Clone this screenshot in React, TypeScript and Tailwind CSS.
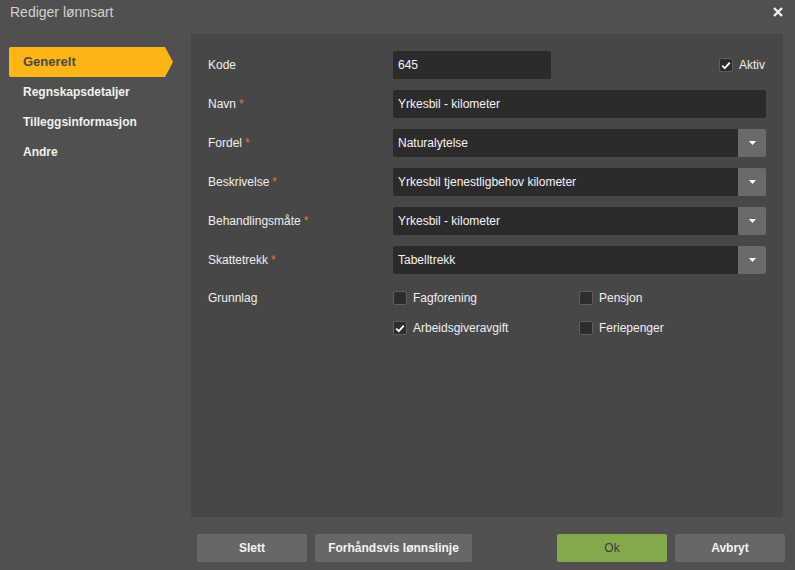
import React from "react";

const Req = () => <span className="text-[#e2792c] ml-[3px]">*</span>;

const Check = ({ checked }: { checked?: boolean }) => (
  <div className="w-[14px] h-[14px] bg-[#2d2d2d] border border-[#5e5e5e] rounded-[2px] flex items-center justify-center shrink-0">
    {checked && (
      <svg width="10" height="9" viewBox="0 0 10 9">
        <path d="M1.2 4.6 L3.8 7.2 L8.8 1.6" stroke="#ffffff" strokeWidth="1.8" fill="none" />
      </svg>
    )}
  </div>
);

const Label = ({ text, req }: { text: string; req?: boolean }) => (
  <div className="h-[28px] flex items-center text-[12px] text-[#efefef]">
    {text}
    {req && <Req />}
  </div>
);

const Select = ({ value }: { value: string }) => (
  <div className="h-[28px] flex rounded-[2px] overflow-hidden">
    <div className="flex-1 bg-[#2b2b2b] pl-[5px] flex items-center text-[12px] text-[#f4f4f4]">{value}</div>
    <div className="w-[28px] bg-[#6a6a6a] flex items-center justify-center">
      <svg width="7" height="4" viewBox="0 0 7 4">
        <polygon points="0,0 7,0 3.5,4" fill="#ffffff" />
      </svg>
    </div>
  </div>
);

export default function App() {
  const side = ["Regnskapsdetaljer", "Tilleggsinformasjon", "Andre"];
  return (
    <div className="w-[795px] h-[570px] bg-[#505050] relative font-['Liberation_Sans',Arial,sans-serif] overflow-hidden">
      <div className="h-[34px] pl-[10px] pt-[4px] text-[14px] leading-[16px] text-[#d2d2d2]">Rediger lønnsart</div>
      <svg className="absolute left-[773px] top-[7px]" width="10" height="10" viewBox="0 0 10 10">
        <path d="M1 1 L9 9 M9 1 L1 9" stroke="#f0f0f0" strokeWidth="2.4" />
      </svg>

      <div className="flex h-[483px]">
        <div className="w-[191px] pl-[9px] pt-[13px]">
          <div className="flex h-[30px]">
            <div className="w-[156px] bg-[#fdb515] rounded-l-[2px] pl-[14px] flex items-center text-[13px] font-bold text-[#4a4a4a]">
              Generelt
            </div>
            <div className="w-0 h-0 border-y-[15px] border-y-transparent border-l-[8px] border-l-[#fdb515]" />
          </div>
          {side.map((s) => (
            <div key={s} className="h-[30px] pl-[14px] flex items-center text-[12px] font-bold text-[#f0f0f0]">
              {s}
            </div>
          ))}
        </div>

        <div className="w-[592px] bg-[#474747] rounded-b-[3px] pt-[17px] px-[17px]">
          <div className="grid grid-cols-[185px_1fr] gap-y-[11px]">
            <Label text="Kode" />
            <div className="h-[28px] flex items-center justify-between">
              <div className="w-[158px] h-[28px] bg-[#2b2b2b] rounded-[2px] pl-[5px] flex items-center text-[12px] text-[#f4f4f4]">645</div>
              <div className="flex items-center gap-[6px] pr-[1px]">
                <Check checked />
                <span className="text-[12px] text-[#efefef]">Aktiv</span>
              </div>
            </div>

            <Label text="Navn" req />
            <div className="h-[28px] bg-[#2b2b2b] rounded-[2px] pl-[5px] flex items-center text-[12px] text-[#f4f4f4]">
              Yrkesbil - kilometer
            </div>

            <Label text="Fordel" req />
            <Select value="Naturalytelse" />

            <Label text="Beskrivelse" req />
            <Select value="Yrkesbil tjenestligbehov kilometer" />

            <Label text="Behandlingsmåte" req />
            <Select value="Yrkesbil - kilometer" />

            <Label text="Skattetrekk" req />
            <Select value="Tabelltrekk" />

            <div className="mt-[1px] h-[24px] flex items-center text-[12px] text-[#efefef]">Grunnlag</div>
            <div className="mt-[1px] grid grid-cols-[186px_1fr] gap-y-[6px]">
              {[
                ["Fagforening", false],
                ["Pensjon", false],
                ["Arbeidsgiveravgift", true],
                ["Feriepenger", false],
              ].map(([t, c]) => (
                <div key={t as string} className="h-[24px] flex items-center gap-[6px]">
                  <Check checked={c as boolean} />
                  <span className="text-[12px] text-[#efefef]">{t as string}</span>
                </div>
              ))}
            </div>
          </div>
        </div>
      </div>

      <div className="flex pt-[17px] pl-[197px] pr-[10px]">
        <div className="flex gap-[8px]">
          <button className="w-[110px] h-[28px] bg-[#676767] rounded-[2px] text-[12px] font-bold text-[#f4f4f4]">Slett</button>
          <button className="w-[157px] h-[28px] bg-[#676767] rounded-[2px] text-[12px] font-bold text-[#f4f4f4]">Forhåndsvis lønnslinje</button>
        </div>
        <div className="flex-1" />
        <div className="flex gap-[8px]">
          <button className="w-[110px] h-[28px] bg-[#84a94a] rounded-[2px] text-[12px] text-[#3a3a3a]">Ok</button>
          <button className="w-[110px] h-[28px] bg-[#676767] rounded-[2px] text-[12px] font-bold text-[#f4f4f4]">Avbryt</button>
        </div>
      </div>
    </div>
  );
}
